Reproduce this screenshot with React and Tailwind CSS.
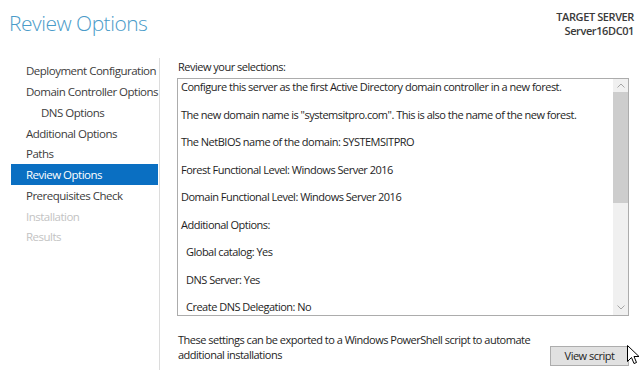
import React from "react";

const font = { fontFamily: '"Open Sans", "Noto Sans", sans-serif' };

const navItems = [
  { label: "Deployment Configuration" },
  { label: "Domain Controller Options" },
  { label: "DNS Options", indent: true },
  { label: "Additional Options" },
  { label: "Paths" },
  { label: "Review Options", active: true },
  { label: "Prerequisites Check" },
  { label: "Installation", disabled: true },
  { label: "Results", disabled: true },
];

const lines = [
  { t: "Configure this server as the first Active Directory domain controller in a new forest." },
  { t: 'The new domain name is "systemsitpro.com". This is also the name of the new forest.' },
  { t: "The NetBIOS name of the domain: SYSTEMSITPRO" },
  { t: "Forest Functional Level: Windows Server 2016" },
  { t: "Domain Functional Level: Windows Server 2016" },
  { t: "Additional Options:" },
  { t: "Global catalog: Yes", indent: true },
  { t: "DNS Server: Yes", indent: true },
  { t: "Create DNS Delegation: No", indent: true },
];

export default function App() {
  return (
    <div className="relative w-[640px] h-[370px] bg-white overflow-hidden text-[#1e1e1e] whitespace-nowrap" style={font}>
      <div className="flex justify-between h-[58px]">
        <div className="pl-[9px] pt-[8px] text-[21px] leading-[30px] font-light tracking-[-0.5px] text-[#4a9bc9]">Review Options</div>
        <div className="pr-[6px] pt-[10px] text-right text-[11px] leading-[14px] font-semibold tracking-[-0.4px] text-[#3a3a3a]">
          <div>TARGET SERVER</div>
          <div>Server16DC01</div>
        </div>
      </div>
      <div className="flex h-[312px]">
        <div className="w-[160px] shrink-0 border-r border-[#dcdcdc] pt-[2.6px]">
          {navItems.map((n) => (
            <div
              key={n.label}
              className={
                "ml-[11px] w-[147px] h-[20.75px] flex items-center text-[11.5px] tracking-[-0.5px] " +
                (n.indent ? "pl-[30px] " : "pl-[15px] ") +
                (n.active ? "bg-[#0a6fc2] text-white " : n.disabled ? "text-[#c3c3c3] " : "text-[#3c3c3c] ")
              }
            >
              {n.label}
            </div>
          ))}
        </div>
        <div className="flex-1 min-w-0 pl-[17px] pr-[11px] pt-[1px] flex flex-col text-[11px] tracking-[-0.5px]">
          <div className="h-[16px] leading-[16px] pl-[1px]">Review your selections:</div>
          <div className="mt-[3px] h-[238px] border border-[#acacac] flex">
            <div className="flex-1 min-w-0">
              {lines.map((l) => (
                <div key={l.t} className={"h-[27.5px] leading-[16px] " + (l.indent ? "pl-[8px]" : "pl-[3px]")}>
                  {l.t}
                </div>
              ))}
            </div>
            <div className="w-[15px] bg-[#f0f0f0] flex flex-col">
              <div className="h-[13px] flex items-center justify-center">
                <svg width="8" height="5" viewBox="0 0 8 5"><path d="M0.5 4.5 L4 1 L7.5 4.5" fill="none" stroke="#a6a6a6" strokeWidth="1" /></svg>
              </div>
              <div className="h-[111px] bg-[#cdcdcd]" />
              <div className="flex-1" />
              <div className="h-[15px] flex items-center justify-center">
                <svg width="8" height="5" viewBox="0 0 8 5"><path d="M0.5 0.5 L4 4 L7.5 0.5" fill="none" stroke="#a6a6a6" strokeWidth="1" /></svg>
              </div>
            </div>
          </div>
          <div className="mt-[15.5px] flex justify-between items-start">
            <div className="leading-[15px] pl-[1px]">
              <div>These settings can be exported to a Windows PowerShell script to automate</div>
              <div>additional installations</div>
            </div>
            <button className="mt-[14.5px] w-[79px] h-[20px] shrink-0 bg-[#e1e1e1] border border-[#adadad] leading-[18px] text-[#1e1e1e]">
              View script
            </button>
          </div>
        </div>
      </div>
      <svg className="absolute left-[627px] top-[345px]" width="13" height="20" viewBox="0 0 13 20">
        <path d="M0.5 0.5 L0.5 16.5 L4.5 12.5 L7 18.5 L9.5 17.5 L7 11.5 L12 11.5 Z" fill="white" stroke="black" strokeWidth="1" strokeLinejoin="round" />
      </svg>
    </div>
  );
}
